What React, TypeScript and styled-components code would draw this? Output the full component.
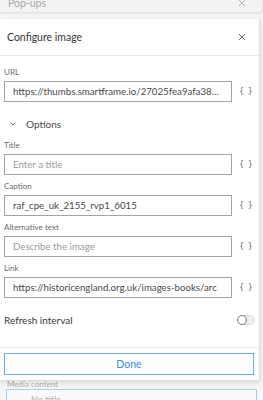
import React, {FC} from 'react';
import styled, {createGlobalStyle} from 'styled-components';

const GlobalStyle = createGlobalStyle`
  html, body {
    margin: 0;
    padding: 0;
    width: 263px;
    height: 400px;
    overflow: hidden;
    background: #f6f6f6;
    font-family: Lato, 'Noto Sans', sans-serif;
    color: #4a4a4a;
  }
`;

type FieldProps = {
  label: string;
  value?: string;
  placeholder?: string;
};

const Field: FC<FieldProps> = ({label, value, placeholder}) => (
  <FieldBlock>
    <Label>{label}</Label>
    <FieldRow>
      <InputBox $empty={!value}>{value || placeholder}</InputBox>
      <Braces>{'{ }'}</Braces>
    </FieldRow>
  </FieldBlock>
);

const CloseIcon: FC<{color: string}> = ({color}) => (
  <svg width="8" height="8" viewBox="0 0 8 8">
    <path d="M1 1L7 7M7 1L1 7" stroke={color} strokeWidth="1" />
  </svg>
);

export default function App() {
  return (
    <Page>
      <GlobalStyle />
      <BackHeader>
        <BackTitle>Pop-ups</BackTitle>
        <CloseIcon color="#b5b5b5" />
      </BackHeader>
      <BackBody>
        <BackLabel>Media content</BackLabel>
        <BackBox>No title</BackBox>
      </BackBody>

      <Dialog>
        <DialogHeader>
          <DialogTitle>Configure image</DialogTitle>
          <CloseIcon color="#6e6e6e" />
        </DialogHeader>
        <DialogBody>
          <Field
            label="URL"
            value="https://thumbs.smartframe.io/27025fea9afa38..."
          />
          <OptionsRow>
            <svg width="6" height="4" viewBox="0 0 6 4">
              <path d="M0.5 0.5L3 3L5.5 0.5" stroke="#6e6e6e" fill="none" strokeWidth="0.9" />
            </svg>
            <OptionsTitle>Options</OptionsTitle>
          </OptionsRow>
          <Field label="Title" placeholder="Enter a title" />
          <Field label="Caption" value="raf_cpe_uk_2155_rvp1_6015" />
          <Field label="Alternative text" placeholder="Describe the image" />
          <Field
            label="Link"
            value="https://historicengland.org.uk/images-books/arc"
          />
          <RefreshRow>
            <RefreshLabel>Refresh interval</RefreshLabel>
            <Toggle>
              <Knob />
            </Toggle>
          </RefreshRow>
        </DialogBody>
        <Footer>
          <DoneButton>Done</DoneButton>
        </Footer>
      </Dialog>
    </Page>
  );
}

const Page = styled.div`
  position: relative;
  width: 263px;
  height: 400px;
  overflow: hidden;
`;

const BackHeader = styled.div`
  height: 18px;
  display: flex;
  align-items: center;
  justify-content: space-between;
  padding: 0 16px 0 8px;
  margin-top: -6px;
  background: #f3f3f3;
  border-right: 1px solid #e4e4e4;
  box-shadow: 0 1px 3px rgba(0, 0, 0, 0.12);
`;

const BackTitle = styled.span`
  font-size: 10.5px;
  color: #a8a8a8;
`;

const BackBody = styled.div`
  padding: 367px 6px 0 6px;
  border-right: 1px solid #e4e4e4;
  width: 251px;
`;

const BackLabel = styled.div`
  font-size: 8px;
  line-height: 10px;
  color: #b0b0b0;
  padding-left: 1px;
`;

const BackBox = styled.div`
  margin-top: 0;
  height: 20px;
  border: 1px solid #a9cdea;
  background: #fafafa;
  font-size: 9px;
  color: #b0b0b0;
  padding-left: 24px;
  padding-top: 4px;
`;

const Dialog = styled.div`
  position: absolute;
  top: 19px;
  left: 0;
  width: 259px;
  background: #ffffff;
  border-right: 1px solid #dedede;
  box-shadow: 0 2px 6px rgba(0, 0, 0, 0.14);
  display: flex;
  flex-direction: column;
`;

const DialogHeader = styled.div`
  height: 36px;
  display: flex;
  align-items: center;
  justify-content: space-between;
  padding: 0 13px 0 7px;
  border-bottom: 1px solid #e8e8e8;
`;

const DialogTitle = styled.span`
  font-size: 10.5px;
  color: #353535;
`;

const DialogBody = styled.div`
  padding: 11px 0 0 4px;
  display: flex;
  flex-direction: column;
`;

const FieldBlock = styled.div`
  display: flex;
  flex-direction: column;
  margin-bottom: 6px;
`;

const Label = styled.div`
  font-size: 8px;
  color: #6a6a6a;
  height: 10px;
  line-height: 10px;
  margin-bottom: 4px;
`;

const FieldRow = styled.div`
  display: flex;
  align-items: center;
`;

const InputBox = styled.div<{$empty: boolean}>`
  width: 228px;
  height: 21px;
  box-sizing: border-box;
  border: 1px solid #a4a4a4;
  padding: 0 8px;
  font-size: 9.7px;
  line-height: 19px;
  white-space: nowrap;
  overflow: hidden;
  color: ${(p) => (p.$empty ? '#9a9a9a' : '#4a4a4a')};
`;

const Braces = styled.span`
  margin-left: 7px;
  font-family: 'DejaVu Sans', sans-serif;
  font-size: 8px;
  color: #6a6a6a;
  letter-spacing: 0.5px;
`;

const OptionsRow = styled.div`
  display: flex;
  align-items: center;
  gap: 10px;
  padding-left: 6px;
  height: 20px;
  margin-top: 6px;
  margin-bottom: 6px;
`;

const OptionsTitle = styled.span`
  font-size: 10px;
  color: #4a4a4a;
`;

const RefreshRow = styled.div`
  display: flex;
  align-items: center;
  justify-content: space-between;
  padding-right: 4px;
  margin-top: 9px;
  height: 14px;
  margin-bottom: 20px;
`;

const RefreshLabel = styled.span`
  font-size: 10px;
  color: #3a3a3a;
`;

const Toggle = styled.div`
  width: 16px;
  height: 8px;
  border-radius: 5px;
  background: #eeeeee;
  border: 1px solid #dcdcdc;
  position: relative;
`;

const Knob = styled.div`
  position: absolute;
  left: -1px;
  top: -1px;
  width: 8px;
  height: 8px;
  border-radius: 50%;
  background: #ffffff;
  border: 1px solid #7a7a7a;
`;

const Footer = styled.div`
  border-top: 1px solid #e8e8e8;
  padding: 5px 4px 5px 4px;
  background: #fdfdfd;
`;

const DoneButton = styled.div`
  height: 22px;
  box-sizing: border-box;
  border: 1.5px solid #6fb0e3;
  display: flex;
  align-items: center;
  justify-content: center;
  font-size: 10.5px;
  color: #3b8fd4;
  width: 250px;
`;
